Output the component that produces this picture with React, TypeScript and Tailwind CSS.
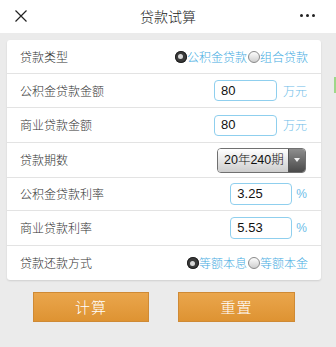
import React from "react";

const font = { fontFamily: '"Noto Sans CJK SC", "Noto Sans", sans-serif' };

function Radio({ checked }: { checked: boolean }) {
  return checked ? (
    <span className="inline-flex items-center justify-center w-[12px] h-[12px] rounded-full bg-[#3a3a3a] shadow-[inset_0_0_0_1px_#222]">
      <span className="w-[5px] h-[5px] rounded-full bg-[#d8d8d8]" />
    </span>
  ) : (
    <span className="inline-block w-[12px] h-[12px] rounded-full border border-[#8a8a8a] bg-gradient-to-b from-[#fdfdfd] to-[#cfcfcf]" />
  );
}

function Row({ h, label, children, last }: { h: string; label: string; children: React.ReactNode; last?: boolean }) {
  return (
    <div className={`flex items-center justify-between pl-[13px] ${h} ${last ? "" : "border-b border-[#e3e3e3]"}`}>
      <span className="text-[12px] text-[#333]">{label}</span>
      {children}
    </div>
  );
}

function Input({ value, w, h }: { value: string; w: string; h: string }) {
  return (
    <div className={`${w} ${h} border border-[#8fcfee] rounded-[4px] bg-white flex items-center pl-[6px] text-[13px] text-[#111]`} style={{ fontFamily: '"Liberation Sans", Arial, sans-serif' }}>
      {value}
    </div>
  );
}

export default function App() {
  return (
    <div className="relative w-[336px] h-[347px] bg-[#ebebeb] flex flex-col font-light" style={font}>
      <div className="relative h-[33px] bg-white flex items-center justify-center">
        <svg className="absolute left-[15px] top-[10px]" width="12" height="12" viewBox="0 0 12 12">
          <path d="M0.5 0.5 L11.5 11.5 M11.5 0.5 L0.5 11.5" stroke="#222" strokeWidth="1.2" />
        </svg>
        <span className="text-[14px] text-[#222]">贷款试算</span>
        <div className="absolute left-[300px] top-[14px] flex gap-[3px]">
          <span className="w-[3px] h-[3px] rounded-full bg-[#222]" />
          <span className="w-[3px] h-[3px] rounded-full bg-[#222]" />
          <span className="w-[3px] h-[3px] rounded-full bg-[#222]" />
        </div>
      </div>
      <div className="absolute left-[334px] top-[77px] w-[2px] h-[16px] bg-[#9fd78a]" />
      <div className="mt-[7px] ml-[7px] w-[314px] bg-white rounded-[3px] shadow-[0_1px_2px_rgba(0,0,0,0.12)]">
        <Row h="h-[34px]" label="贷款类型">
          <div className="flex items-center pr-[13px] text-[12px] text-[#45ace2]">
            <Radio checked />
            <span className="mr-[1px]">公积金贷款</span>
            <Radio checked={false} />
            <span>组合贷款</span>
          </div>
        </Row>
        <Row h="h-[34px]" label="公积金贷款金额">
          <div className="flex items-center gap-[6px] pr-[14px]">
            <Input value="80" w="w-[63px]" h="h-[21px]" />
            <span className="text-[12px] text-[#6cbde8]">万元</span>
          </div>
        </Row>
        <Row h="h-[35px]" label="商业贷款金额">
          <div className="flex items-center gap-[6px] pr-[14px]">
            <Input value="80" w="w-[63px]" h="h-[21px]" />
            <span className="text-[12px] text-[#6cbde8]">万元</span>
          </div>
        </Row>
        <Row h="h-[35px]" label="贷款期数">
          <div className="mr-[15px] w-[89px] h-[25px] rounded-[4px] border border-[#707070] flex overflow-hidden">
            <div className="flex-1 flex items-center pl-[6px] bg-gradient-to-b from-[#ffffff] to-[#cdcdcd] text-[12.5px] text-[#111]" style={{ fontFamily: '"Liberation Sans", "Noto Sans CJK SC", sans-serif' }}>
              20年240期
            </div>
            <div className="w-[17px] flex items-center justify-center bg-gradient-to-b from-[#8e8e8e] to-[#4a4a4a] border-l border-[#555]">
              <svg width="6" height="4" viewBox="0 0 6 4">
                <path d="M0 0 L6 0 L3 4 Z" fill="#f0f0f0" />
              </svg>
            </div>
          </div>
        </Row>
        <Row h="h-[33px]" label="公积金贷款利率">
          <div className="flex items-center gap-[4px] pr-[14px]">
            <Input value="3.25" w="w-[62px]" h="h-[22px]" />
            <span className="text-[12px] text-[#6cbde8]" style={{ fontFamily: '"Liberation Sans", sans-serif' }}>%</span>
          </div>
        </Row>
        <Row h="h-[35px]" label="商业贷款利率">
          <div className="flex items-center gap-[4px] pr-[14px]">
            <Input value="5.53" w="w-[62px]" h="h-[22px]" />
            <span className="text-[12px] text-[#6cbde8]" style={{ fontFamily: '"Liberation Sans", sans-serif' }}>%</span>
          </div>
        </Row>
        <Row h="h-[34px]" label="贷款还款方式" last>
          <div className="flex items-center pr-[13px] text-[12px] text-[#45ace2]">
            <Radio checked />
            <span className="mr-[1px]">等额本息</span>
            <Radio checked={false} />
            <span>等额本金</span>
          </div>
        </Row>
      </div>
      <div className="flex mt-[12px] ml-[33px] gap-[29px]">
        <button className="w-[116px] h-[30px] bg-gradient-to-b from-[#eaa64c] to-[#de9332] border border-[#cf8a35] text-white text-[15px] font-light tracking-[1px]">计算</button>
        <button className="w-[117px] h-[30px] bg-gradient-to-b from-[#eaa64c] to-[#de9332] border border-[#cf8a35] text-white text-[15px] font-light tracking-[1px]">重置</button>
      </div>
    </div>
  );
}
